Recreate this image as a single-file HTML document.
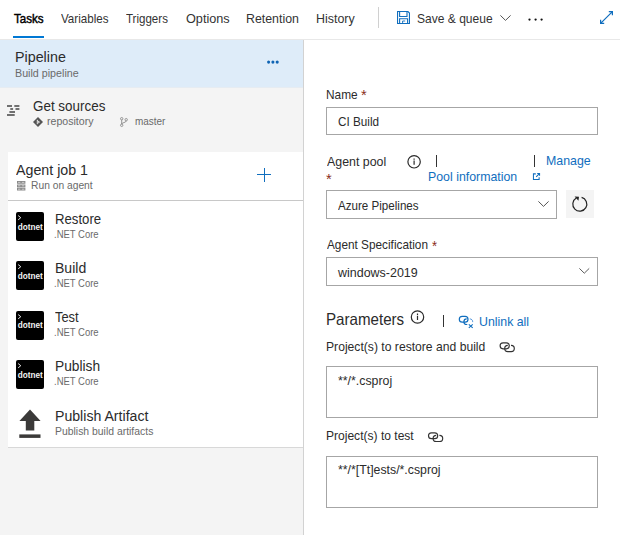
<!DOCTYPE html>
<html lang="en">
<head>
<meta charset="utf-8">
<title>Pipeline - Tasks</title>
<style>
html,body{margin:0;padding:0}
body{width:630px;height:535px;background:#fff;overflow:hidden;position:relative;font-family:"Liberation Sans",sans-serif}
.a{position:absolute}
.t{position:absolute;white-space:nowrap;transform-origin:0 0;line-height:normal;display:block}
.box{position:absolute;box-sizing:border-box;border:1px solid #a6a6a6;background:#fff}
.dn{position:absolute;left:16px;width:28.2px;height:28.7px;background:#000;border-radius:2px;overflow:hidden}
.dn b{position:absolute;left:1.8px;top:10.6px;font-size:8.2px;font-weight:700;color:#f2f2f2;line-height:normal}
i.p{display:inline-block;width:0;height:0;vertical-align:baseline}
svg{position:absolute;overflow:visible}
</style>
</head>
<body>
<!-- top bar -->
<div class="a" style="left:0;top:38.5px;width:620px;height:1px;background:#e8e8e8"></div>
<div class="a" style="left:13px;top:36px;width:31px;height:2px;background:#0078d4"></div>
<div class="a" style="left:378px;top:7px;width:1px;height:21px;background:#d0d0d0"></div>
<!-- save icon -->
<svg style="left:397.3px;top:11px" width="13" height="13" viewBox="0 0 13 13" fill="none" stroke="#106ebe" stroke-width="1.1"><path d="M.55.55h10.4l1.5 1.5v10.4H.55z"/><path d="M2.6.55v5h7.4v-5"/><path d="M2.6 12.45V7.8h8v4.65"/><path d="M5.6 10v2.45M5.6 10h2.6" stroke-width=".9"/></svg>
<!-- chevron -->
<svg style="left:500px;top:15px" width="11" height="6" viewBox="0 0 11 6" fill="none" stroke="#555" stroke-width="1"><path d="M.4.4l5.1 5 5.1-5"/></svg>
<!-- more dots -->
<svg style="left:0;top:0" width="630" height="39" viewBox="0 0 630 39" fill="#111"><circle cx="529.5" cy="19.6" r="1.15"/><circle cx="535.6" cy="19.6" r="1.15"/><circle cx="541.6" cy="19.6" r="1.15"/></svg>
<!-- expand icon -->
<svg style="left:600px;top:11px" width="13" height="13" viewBox="0 0 13 13" fill="none" stroke="#106ebe" stroke-width="1.2"><path d="M.6 12.4l11.8-11.8M8.8.6h3.6v3.6M.6 8.8v3.6h3.6"/></svg>

<!-- left panel -->
<div class="a" style="left:0;top:39.5px;width:303px;height:496px;background:#f4f4f4"></div>
<div class="a" style="left:303px;top:39.5px;width:1px;height:496px;background:#d2d2d2"></div>
<div class="a" style="left:0;top:39.5px;width:303px;height:47.5px;background:#deecf9"></div>
<div class="a" style="left:0;top:87px;width:303px;height:1px;background:#e6ecf2"></div>
<!-- pipeline dots -->
<svg style="left:0;top:0" width="303" height="90" viewBox="0 0 303 90" fill="#0f64b4"><circle cx="268.6" cy="62.1" r="1.55"/><circle cx="272.9" cy="62.1" r="1.55"/><circle cx="277.2" cy="62.1" r="1.55"/></svg>
<!-- get sources icon -->
<svg style="left:0;top:0" width="30" height="130" viewBox="0 0 30 130" stroke="#444" stroke-width="1.5" fill="none"><path d="M7 106h5M14.3 106h5.1M10.3 108.9h2.8M15.5 108.9h3.9M9.4 111.9h5.6M7 114.9h7.7"/></svg>
<!-- repo icon -->
<svg style="left:32.5px;top:116.5px" width="10" height="10" viewBox="0 0 10 10"><path d="M5 0L10 5 5 10 0 5z" fill="#555"/><path d="M4.3 2.8v4.4M4.3 3.6l2.2 1.5-1.6 1" stroke="#f4f4f4" stroke-width=".9" fill="none"/></svg>
<!-- branch icon -->
<svg style="left:120px;top:117px" width="8" height="10" viewBox="0 0 8 10" fill="none" stroke="#858585" stroke-width=".85"><circle cx="1.7" cy="1.7" r="1.2"/><circle cx="1.7" cy="8.3" r="1.2"/><circle cx="6.2" cy="2.7" r="1.2"/><path d="M1.7 2.9v4.2M6.2 3.9c0 2-4.5 1.4-4.5 3.2"/></svg>

<!-- agent job block -->
<div class="a" style="left:8px;top:152px;width:295px;height:295px;background:#fff"></div>
<div class="a" style="left:8px;top:447px;width:295px;height:1px;background:#d8d8d8"></div>
<div class="a" style="left:8px;top:200px;width:295px;height:1px;background:#c8c8c8"></div>
<!-- server icon -->
<svg style="left:16.7px;top:180.9px" width="8.4" height="9.6" viewBox="0 0 8 9" preserveAspectRatio="none"><path d="M0 0h8v2.6H0zM0 3.2h8v2.6H0zM0 6.4h8V9H0z" fill="#8a8a8a"/><path d="M1 1.3h2.2M4.6 1.3h2.4M1 4.5h2.2M4.6 4.5h2.4M1 7.7h2.2M4.6 7.7h2.4" stroke="#d8d8d8" stroke-width=".8" fill="none"/></svg>
<!-- plus -->
<div class="a" style="left:257px;top:174px;width:14px;height:1px;background:#106ebe"></div>
<div class="a" style="left:263.5px;top:167.5px;width:1px;height:14px;background:#106ebe"></div>

<!-- dotnet icons -->
<div class="dn" style="top:212px"><svg style="left:0;top:0" width="28" height="29" viewBox="0 0 28 29" fill="none" stroke="#e4e4e4" stroke-width="1"><path d="M2.2 3.6l2.6 2.1-2.6 2.1"/></svg><b>dotnet</b></div>
<div class="dn" style="top:261.4px"><svg style="left:0;top:0" width="28" height="29" viewBox="0 0 28 29" fill="none" stroke="#e4e4e4" stroke-width="1"><path d="M2.2 3.6l2.6 2.1-2.6 2.1"/></svg><b>dotnet</b></div>
<div class="dn" style="top:310.9px"><svg style="left:0;top:0" width="28" height="29" viewBox="0 0 28 29" fill="none" stroke="#e4e4e4" stroke-width="1"><path d="M2.2 3.6l2.6 2.1-2.6 2.1"/></svg><b>dotnet</b></div>
<div class="dn" style="top:360.3px"><svg style="left:0;top:0" width="28" height="29" viewBox="0 0 28 29" fill="none" stroke="#e4e4e4" stroke-width="1"><path d="M2.2 3.6l2.6 2.1-2.6 2.1"/></svg><b>dotnet</b></div>
<!-- upload icon -->
<svg style="left:0;top:0" width="60" height="450" viewBox="0 0 60 450"><path d="M30 409.6l10.6 11.5h-6.3v9.4h-8.5v-9.4h-6.4z" fill="#3b3a39"/><rect x="19.3" y="434.4" width="21.2" height="3.5" fill="#3b3a39"/></svg>

<!-- right panel -->
<div class="box" style="left:326px;top:107px;width:272px;height:28px"></div>
<div class="box" style="left:326px;top:190px;width:231px;height:29px"></div>
<div class="a" style="left:566px;top:190px;width:28px;height:28px;background:#f4f4f4"></div>
<div class="box" style="left:326px;top:257px;width:272px;height:29px"></div>
<div class="box" style="left:326px;top:366px;width:272px;height:52px"></div>
<div class="box" style="left:326px;top:456px;width:272px;height:52px"></div>
<!-- info icons -->
<svg style="left:0;top:0" width="630" height="535" viewBox="0 0 630 535" fill="none" stroke="#2a2a2a" stroke-width="1.2"><circle cx="414.1" cy="161.8" r="6.2"/><path d="M414.1 160.6v4.2M414.1 158.4v1.4"/><circle cx="417.5" cy="317" r="6.2"/><path d="M417.5 315.8v4.2M417.5 313.6v1.4"/></svg>
<!-- pipes -->
<div class="a" style="left:436px;top:155px;width:1.3px;height:12px;background:#333"></div>
<div class="a" style="left:534px;top:155px;width:1.3px;height:12px;background:#333"></div>
<div class="a" style="left:443px;top:315px;width:1.3px;height:12px;background:#333"></div>
<!-- external link icon -->
<svg style="left:533.3px;top:173.4px" width="7" height="7" viewBox="0 0 8 8" fill="none" stroke="#106ebe" stroke-width="1.2"><path d="M3.2 1H.5v6.5H7V4.8M4.8.5h2.7v2.7M7.3.7L3.6 4.4"/></svg>
<!-- chevrons -->
<svg style="left:537.5px;top:201px" width="11" height="6" viewBox="0 0 11 6" fill="none" stroke="#555" stroke-width="1"><path d="M.4.4l5.1 5 5.1-5"/></svg>
<svg style="left:578.7px;top:268.2px" width="10.6" height="5.8" viewBox="0 0 11 6" fill="none" stroke="#555" stroke-width="1"><path d="M.4.4l5.1 5 5.1-5"/></svg>
<!-- refresh icon -->
<svg style="left:0;top:0" width="630" height="535" viewBox="0 0 630 535"><path d="M581.6 197.4A7 7 0 1 1 576.3 198.1" fill="none" stroke="#222" stroke-width="1.2"/><path d="M574.6 196.6l4.4.2-.6 3.9z" fill="#222"/></svg>
<!-- unlink icon -->
<svg style="left:0;top:0" width="630" height="535" viewBox="0 0 630 535" fill="none" stroke="#106ebe" stroke-width="1.2"><rect x="459.3" y="316.3" width="8.7" height="5.8" rx="2.9"/><path d="M467.3 324.5h-.6a2.8 2.8 0 0 1 0-5.6"/><path d="M469.8 318.9a2.8 2.8 0 0 1 2.9 3.2" stroke-width=".9" stroke="#4a90d9"/><path d="M468.8 324.3l3.9 3.6M472.7 324.3l-3.9 3.6" stroke-width="1.1"/></svg>
<!-- link icons -->
<svg style="left:0;top:0" width="630" height="535" viewBox="0 0 630 535" fill="none" stroke="#333" stroke-width="1.15"><rect x="500.1" y="342.9" width="9.2" height="5.9" rx="2.95"/><path d="M511.0 345.4h.2a3.1 3.1 0 0 1 0 6.2h-3.4a3.1 3.1 0 0 1 0-6.2"/><rect x="428.5" y="432.8" width="9.2" height="5.9" rx="2.95"/><path d="M439.4 435.3h.2a3.1 3.1 0 0 1 0 6.2h-3.4a3.1 3.1 0 0 1 0-6.2"/></svg>

<span class="t" style="left:14.00px;top:12px;font-size:12.6px;color:#000;font-weight:400;-webkit-text-stroke:.45px #000;transform:scaleX(0.9188)">Tasks</span>
<span class="t" style="left:61.00px;top:12px;font-size:12.6px;color:#333;font-weight:400;transform:scaleX(0.9201)">Variables</span>
<span class="t" style="left:126.00px;top:12px;font-size:12.6px;color:#333;font-weight:400;transform:scaleX(0.9167)">Triggers</span>
<span class="t" style="left:186.00px;top:12px;font-size:12.6px;color:#333;font-weight:400;transform:scaleX(1.0072)">Options</span>
<span class="t" style="left:246.00px;top:12px;font-size:12.6px;color:#333;font-weight:400;transform:scaleX(0.9814)">Retention</span>
<span class="t" style="left:316.00px;top:12px;font-size:12.6px;color:#333;font-weight:400;transform:scaleX(0.9860)">History</span>
<span class="t" style="left:417.00px;top:12px;font-size:12.6px;color:#333;font-weight:400;transform:scaleX(0.9552)">Save &amp; queue</span>
<span class="t" style="left:15.00px;top:49px;font-size:14px;color:#2b2b2b;font-weight:400;transform:scaleX(1.0202)">Pipeline</span>
<span class="t" style="left:15.00px;top:68px;font-size:10px;color:#6a6a6a;font-weight:400;transform:scaleX(1.0704)">Build pipeline</span>
<span class="t" style="left:33.00px;top:98px;font-size:14px;color:#2b2b2b;font-weight:400;transform:scaleX(0.9587)">Get sources</span>
<span class="t" style="left:47.00px;top:116px;font-size:10px;color:#6a6a6a;font-weight:400;transform:scaleX(1.0583)">repository</span>
<span class="t" style="left:135.00px;top:116px;font-size:10px;color:#6a6a6a;font-weight:400;transform:scaleX(0.9952)">master</span>
<span class="t" style="left:16.00px;top:162px;font-size:14px;color:#2b2b2b;font-weight:400;transform:scaleX(1.0163)">Agent job 1</span>
<span class="t" style="left:31.00px;top:180px;font-size:10px;color:#6a6a6a;font-weight:400;transform:scaleX(1.0268)">Run on agent</span>
<span class="t" style="left:55.00px;top:211px;font-size:14px;color:#2b2b2b;font-weight:400;transform:scaleX(0.9410)">Restore</span>
<span class="t" style="left:54.00px;top:229px;font-size:10px;color:#6a6a6a;font-weight:400;transform:scaleX(0.9479)">.NET Core</span>
<span class="t" style="left:55.00px;top:260px;font-size:14px;color:#2b2b2b;font-weight:400;transform:scaleX(1.0038)">Build</span>
<span class="t" style="left:54.00px;top:278px;font-size:10px;color:#6a6a6a;font-weight:400;transform:scaleX(0.9479)">.NET Core</span>
<span class="t" style="left:55.00px;top:309px;font-size:14px;color:#2b2b2b;font-weight:400;transform:scaleX(0.9188)">Test</span>
<span class="t" style="left:54.00px;top:327px;font-size:10px;color:#6a6a6a;font-weight:400;transform:scaleX(0.9479)">.NET Core</span>
<span class="t" style="left:55.00px;top:358px;font-size:14px;color:#2b2b2b;font-weight:400;transform:scaleX(0.9828)">Publish</span>
<span class="t" style="left:54.00px;top:376px;font-size:10px;color:#6a6a6a;font-weight:400;transform:scaleX(0.9479)">.NET Core</span>
<span class="t" style="left:55.00px;top:408px;font-size:14px;color:#2b2b2b;font-weight:400;transform:scaleX(1.0086)">Publish Artifact</span>
<span class="t" style="left:55.00px;top:426px;font-size:10px;color:#6a6a6a;font-weight:400;transform:scaleX(1.0408)">Publish build artifacts</span>
<span class="t" style="left:326.00px;top:88px;font-size:12.6px;color:#2b2b2b;font-weight:400;transform:scaleX(0.9411)">Name</span>
<span class="t" style="left:361.00px;top:87px;font-size:14px;color:#8a2c20;font-weight:400;transform:scaleX(1.0477)">*</span>
<span class="t" style="left:338.00px;top:115px;font-size:12.6px;color:#2b2b2b;font-weight:400;transform:scaleX(0.9316)">CI Build</span>
<span class="t" style="left:327.00px;top:155px;font-size:12.6px;color:#2b2b2b;font-weight:400;transform:scaleX(0.9837)">Agent pool</span>
<span class="t" style="left:546.00px;top:154px;font-size:12.6px;color:#106ebe;font-weight:400;transform:scaleX(0.9822)">Manage</span>
<span class="t" style="left:326.00px;top:171px;font-size:14px;color:#8a2c20;font-weight:400;transform:scaleX(1.0477)">*</span>
<span class="t" style="left:428.00px;top:170px;font-size:12.6px;color:#106ebe;font-weight:400;transform:scaleX(0.9801)">Pool information</span>
<span class="t" style="left:338.00px;top:199px;font-size:12.6px;color:#2b2b2b;font-weight:400;transform:scaleX(0.9213)">Azure Pipelines</span>
<span class="t" style="left:327.00px;top:238px;font-size:12.6px;color:#2b2b2b;font-weight:400;transform:scaleX(0.9365)">Agent Specification</span>
<span class="t" style="left:432.00px;top:238px;font-size:14px;color:#8a2c20;font-weight:400;transform:scaleX(0.9290)">*</span>
<span class="t" style="left:338.00px;top:266px;font-size:12.6px;color:#2b2b2b;font-weight:400;transform:scaleX(0.9905)">windows-2019</span>
<span class="t" style="left:326.00px;top:310px;font-size:16.5px;color:#2b2b2b;font-weight:400;transform:scaleX(0.9166)">Parameters</span>
<span class="t" style="left:479.00px;top:315px;font-size:12.6px;color:#106ebe;font-weight:400;transform:scaleX(0.9805)">Unlink all</span>
<span class="t" style="left:326.00px;top:340px;font-size:12.6px;color:#2b2b2b;font-weight:400;transform:scaleX(0.9643)">Project(s) to restore and build</span>
<span class="t" style="left:338.00px;top:374px;font-size:12.6px;color:#2b2b2b;font-weight:400;transform:scaleX(0.9803)">**/*.csproj</span>
<span class="t" style="left:326.00px;top:429px;font-size:12.6px;color:#2b2b2b;font-weight:400;transform:scaleX(0.9566)">Project(s) to test</span>
<span class="t" style="left:338.00px;top:463px;font-size:12.6px;color:#2b2b2b;font-weight:400;transform:scaleX(0.9772)">**/*[Tt]ests/*.csproj</span>
</body>
</html>
